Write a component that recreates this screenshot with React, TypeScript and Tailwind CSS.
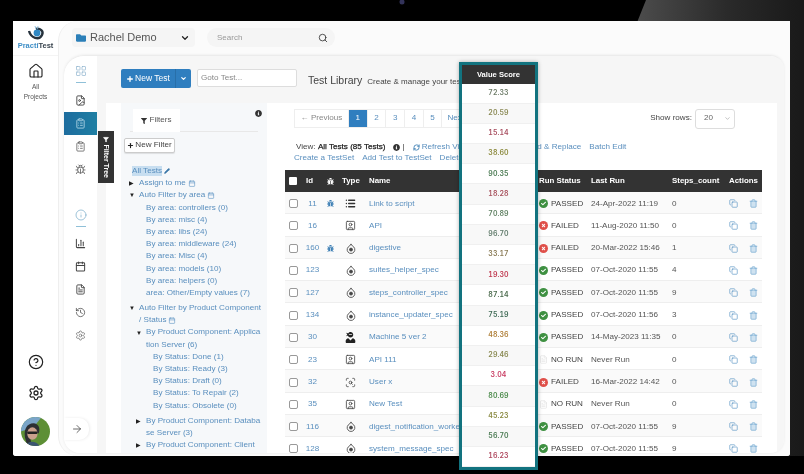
import {
  ArrowRight,
  Bug,
  ChevronDown,
  CircleHelp,
  ClipboardList,
  Copy,
  FileImage,
  FileText,
  History,
  House,
  Info,
  LayoutGrid,
  List,
  Pencil,
  RefreshCw,
  Search,
  Settings,
  SquareUser,
  Trash2,
  BarChart3,
  Calendar,
  Filter,
  Plus,
  ScanSearch,
} from 'lucide-react';
import { FaBug, FaCheck, FaTimes, FaInfoCircle, FaFilter, FaFolder, FaUserNinja } from 'react-icons/fa';

type Status = 'PASSED' | 'FAILED' | 'NO RUN';
type TestType = 'list' | 'api' | 'spec' | 'machine' | 'user';

interface TestRow {
  id: number;
  bug?: boolean;
  type: TestType;
  name: string;
  status: Status;
  lastRun: string;
  steps: number;
}

const rows: TestRow[] = [
  { id: 11, bug: true, type: 'list', name: 'Link to script', status: 'PASSED', lastRun: '24-Apr-2022 11:19', steps: 0 },
  { id: 16, type: 'api', name: 'API', status: 'FAILED', lastRun: '11-Aug-2020 11:50', steps: 0 },
  { id: 160, bug: true, type: 'spec', name: 'digestive', status: 'FAILED', lastRun: '20-Mar-2022 15:46', steps: 1 },
  { id: 123, type: 'spec', name: 'suites_helper_spec', status: 'PASSED', lastRun: '07-Oct-2020 11:55', steps: 4 },
  { id: 127, type: 'spec', name: 'steps_controller_spec', status: 'PASSED', lastRun: '07-Oct-2020 11:55', steps: 9 },
  { id: 134, type: 'spec', name: 'instance_updater_spec', status: 'PASSED', lastRun: '07-Oct-2020 11:56', steps: 3 },
  { id: 30, type: 'machine', name: 'Machine 5 ver 2', status: 'PASSED', lastRun: '14-May-2023 11:35', steps: 0 },
  { id: 23, type: 'api', name: 'API 111', status: 'NO RUN', lastRun: 'Never Run', steps: 0 },
  { id: 32, type: 'user', name: 'User x', status: 'FAILED', lastRun: '16-Mar-2022 14:42', steps: 0 },
  { id: 35, type: 'api', name: 'New Test', status: 'NO RUN', lastRun: 'Never Run', steps: 0 },
  { id: 116, type: 'spec', name: 'digest_notification_worker_spec', status: 'PASSED', lastRun: '07-Oct-2020 11:55', steps: 9 },
  { id: 128, type: 'spec', name: 'system_message_spec', status: 'PASSED', lastRun: '07-Oct-2020 11:55', steps: 9 },
];

const scores = [
  { v: '72.33', c: 'text-[#6f7d6a]' },
  { v: '20.59', c: 'text-[#8b8a55]' },
  { v: '15.14', c: 'text-[#a84f60]' },
  { v: '38.60', c: 'text-[#8d8b3f]' },
  { v: '90.35', c: 'text-[#4a7a52]' },
  { v: '18.28', c: 'text-[#a8525e]' },
  { v: '70.89', c: 'text-[#5f8062]' },
  { v: '96.70', c: 'text-[#5f7a6a]' },
  { v: '33.17', c: 'text-[#8a7b55]' },
  { v: '19.30', c: 'text-[#c03a50]' },
  { v: '87.14', c: 'text-[#4a6a4c]' },
  { v: '75.19', c: 'text-[#3f6a55]' },
  { v: '48.36', c: 'text-[#b0803a]' },
  { v: '29.46', c: 'text-[#8a8a52]' },
  { v: '3.04', c: 'text-[#c83a60]' },
  { v: '80.69', c: 'text-[#4a8a4a]' },
  { v: '45.23', c: 'text-[#8a8a42]' },
  { v: '56.70', c: 'text-[#4a7a52]' },
  { v: '16.23', c: 'text-[#b04a60]' },
];

interface TreeRow {
  text: string;
  pl: string;
  caret?: 'open' | 'closed';
  icon?: boolean;
  gap?: boolean;
}

const tree: TreeRow[] = [
  { text: 'Assign to me', pl: 'pl-[15px]', caret: 'closed', icon: true },
  { text: 'Auto Filter by area', pl: 'pl-[15px]', caret: 'open', icon: true },
  { text: 'By area: controllers (0)', pl: 'pl-[22px]' },
  { text: 'By area: misc (4)', pl: 'pl-[22px]' },
  { text: 'By area: libs (24)', pl: 'pl-[22px]' },
  { text: 'By area: middleware (24)', pl: 'pl-[22px]' },
  { text: 'By area: Misc (4)', pl: 'pl-[22px]' },
  { text: 'By area: models (10)', pl: 'pl-[22px]' },
  { text: 'By area: helpers (0)', pl: 'pl-[22px]' },
  { text: 'area: Other/Empty values (7)', pl: 'pl-[22px]' },
  { text: 'Auto Filter by Product Component', pl: 'pl-[15px]', caret: 'open', gap: true },
  { text: '/ Status', pl: 'pl-[15px]', icon: true },
  { text: 'By Product Component: Applica', pl: 'pl-[22px]', caret: 'open' },
  { text: 'tion Server (6)', pl: 'pl-[22px]' },
  { text: 'By Status: Done (1)', pl: 'pl-[29px]' },
  { text: 'By Status: Ready (3)', pl: 'pl-[29px]' },
  { text: 'By Status: Draft (0)', pl: 'pl-[29px]' },
  { text: 'By Status: To Repair (2)', pl: 'pl-[29px]' },
  { text: 'By Status: Obsolete (0)', pl: 'pl-[29px]' },
  { text: 'By Product Component: Databa', pl: 'pl-[22px]', caret: 'closed', gap: true },
  { text: 'se Server (3)', pl: 'pl-[22px]' },
  { text: 'By Product Component: Client', pl: 'pl-[22px]', caret: 'closed' },
];

function SpecIcon() {
  return (
    <svg viewBox="0 0 12 13" className="w-[10px] h-[11px] text-[#444]" fill="none" stroke="currentColor" strokeWidth="1">
      <path d="M6 1 L7.8 3.6 A4.6 4.6 0 1 1 4.2 3.6 Z" />
      <circle cx="6" cy="7.8" r="1.8" fill="currentColor" />
    </svg>
  );
}

function TypeIcon({ type }: { type: TestType }) {
  if (type === 'list') return <List className="w-[11px] h-[11px] text-[#333]" strokeWidth={3} />;
  if (type === 'api') return <SquareUser className="w-[11px] h-[11px] text-[#444]" strokeWidth={1.8} />;
  if (type === 'machine') return <FaUserNinja className="w-[11px] h-[11px] text-[#222]" />;
  if (type === 'user') return <ScanSearch className="w-[11px] h-[11px] text-[#444]" strokeWidth={1.8} />;
  return <SpecIcon />;
}

function StatusIcon({ status }: { status: Status }) {
  if (status === 'PASSED')
    return (
      <span className="w-[9px] h-[9px] shrink-0 rounded-full bg-[#3f9142] flex items-center justify-center">
        <FaCheck className="w-[5px] h-[5px] text-white" />
      </span>
    );
  if (status === 'FAILED')
    return (
      <span className="w-[9px] h-[9px] shrink-0 rounded-full bg-[#e0504a] flex items-center justify-center">
        <FaTimes className="w-[5px] h-[5px] text-white" />
      </span>
    );
  return <FileText className="w-[9px] h-[9px] shrink-0 text-[#ddd]" strokeWidth={1.5} />;
}

function Rail() {
  return (
    <div className="w-[45px] shrink-0 flex flex-col items-center bg-white">
      <svg viewBox="0 0 20 16" className="w-[20px] h-[16px] mt-[5px]" fill="none">
        <path d="M3 5 C5 12 13 15 16 9 C18 5 14 2 10 3" stroke="#26323d" strokeWidth="2.4" />
        <circle cx="11" cy="7" r="3.4" fill="#2f88c4" />
        <path d="M9 0 L10 3 M12 0 L11.5 3" stroke="#7fb8dc" strokeWidth="0.8" />
      </svg>
      <div className="text-[7.5px] leading-[10px] mt-[-1px] font-bold whitespace-nowrap">
        <span className="text-[#3f8fc7]">Practi</span>
        <span className="text-[#39444e]">Test</span>
      </div>
      <div className="w-full h-[1px] bg-[#f4f4f4] mt-[4px]" />
      <House className="w-[16px] h-[16px] mt-[7px] text-[#222]" strokeWidth={1.7} />
      <div className="text-[6.5px] leading-[10px] mt-[3px] text-center text-[#555]">
        All
        <br />
        Projects
      </div>
      <div className="flex-1" />
      <CircleHelp className="w-[16px] h-[16px] text-[#222]" strokeWidth={1.8} />
      <Settings className="w-[16px] h-[16px] mt-[15px] text-[#222]" strokeWidth={1.9} />
      <svg viewBox="0 0 28 28" className="w-[29px] h-[29px] mt-[16px] mb-[10px] rounded-full">
        <rect width="28" height="28" fill="#5d8f35" />
        <path d="M0 0 H20 L12 10 L0 14 Z" fill="#7aa5c8" />
        <path d="M5 24 C1 12 6 6 12 6 C17 6 19 11 17 16 C14 14 10 15 9 19 L10 28 H5 Z" fill="#2c2f33" />
        <ellipse cx="11" cy="16" rx="5" ry="6" fill="#c9a08c" />
        <rect x="6" y="14" width="10" height="2.5" rx="1" fill="#222" />
        <path d="M4 28 C6 23 14 22 18 28 Z" fill="#3b5570" />
      </svg>
    </div>
  );
}

function NavIcon({ children, line }: { children: React.ReactNode; line?: boolean }) {
  return (
    <div className="h-[23px] flex flex-col items-center justify-center relative">
      {children}
      {line && <span className="absolute bottom-[-1px] w-[10px] h-[1px] bg-[#8fc0d8]" />}
    </div>
  );
}

function IconColumn() {
  const icon = 'w-[11px] h-[11px] text-[#444]';
  return (
    <div className="w-[33px] shrink-0 bg-white flex flex-col pt-[3px] rounded-tl-[20px] pb-[13px]">
      <NavIcon line>
        <LayoutGrid className="w-[12px] h-[12px] text-[#8fb4cf]" strokeWidth={1.4} />
      </NavIcon>
      <div className="h-[7px]" />
      <NavIcon>
        <FileImage className={icon} strokeWidth={2} />
      </NavIcon>
      <div className="h-[23px] mt-[0px] bg-gradient-to-r from-[#1d6c9e] to-[#1f7fa3] flex items-center justify-center">
        <ClipboardList className="w-[11px] h-[11px] text-[#a9d0e2]" strokeWidth={2} />
      </div>
      <NavIcon>
        <ClipboardList className={icon} strokeWidth={1.5} />
      </NavIcon>
      <NavIcon>
        <Bug className={icon} strokeWidth={1.5} />
      </NavIcon>
      <div className="h-[22px]" />
      <NavIcon line>
        <Info className="w-[12px] h-[12px] text-[#7fb0cc]" strokeWidth={1.5} />
      </NavIcon>
      <div className="h-[6px]" />
      <NavIcon>
        <BarChart3 className={icon} strokeWidth={2.2} />
      </NavIcon>
      <NavIcon>
        <Calendar className={icon} strokeWidth={2.2} />
      </NavIcon>
      <NavIcon>
        <FileText className={icon} strokeWidth={2} />
      </NavIcon>
      <NavIcon>
        <History className={icon} strokeWidth={1.6} />
      </NavIcon>
      <NavIcon>
        <Settings className="w-[11px] h-[11px] text-[#666]" strokeWidth={1.5} />
      </NavIcon>
      <div className="flex-1" />
      <div className="w-[25px] h-[22px] bg-white rounded-r-[10px] shadow-[1px_0_3px_rgba(0,0,0,0.08)] flex items-center justify-center">
        <ArrowRight className="w-[12px] h-[12px] text-[#444]" strokeWidth={1.6} />
      </div>
    </div>
  );
}

function FilterPanel() {
  return (
    <div className="w-[146px] shrink-0 bg-[#f6f8fa] px-[3px] pt-[6px] relative">
      <div className="h-[23px] border-b border-[#e8e8e8] mx-[6px]">
        <div className="w-[47px] h-[23px] ml-[3px] bg-white flex items-center justify-center gap-[2px] text-[#555]">
          <FaFilter className="w-[6px] h-[6px] text-[#333]" />
          Filters
        </div>
      </div>
      <FaInfoCircle className="absolute left-[134px] top-[7px] w-[7px] h-[7px] text-[#333]" />
      <div className="w-[51px] h-[15px] mt-[6px] bg-white border border-[#ccc] rounded-[2px] shadow-[0_1px_1px_rgba(0,0,0,0.1)] flex items-center justify-center gap-[1px] text-[#444]">
        <Plus className="w-[7px] h-[7px] text-[#222]" strokeWidth={4} />
        New Filter
      </div>
      <div className="h-[12.2px] mt-[12px] pl-[8px] flex items-center gap-[2px] text-[#5a8fbe]">
        <span className="bg-[#c7def0] leading-[10px]">All Tests</span>
        <Pencil className="w-[6px] h-[6px] text-[#3d78a8] fill-[#3d78a8]" />
      </div>
      {tree.map((row) => (
        <div
          key={row.text}
          className={`h-[12.2px] flex items-center whitespace-nowrap relative text-[#5a8fbe] ${row.pl} ${row.gap ? 'mt-[3px]' : ''}`}
        >
          {row.caret && (
            <span
              className={`absolute ${row.pl === 'pl-[15px]' ? 'left-[5px]' : 'left-[12px]'} text-[#222] text-[6px] leading-none`}
            >
              {row.caret === 'open' ? '▼' : '▶'}
            </span>
          )}
          {row.text}
          {row.icon && <Calendar className="w-[8px] h-[7px] ml-[2px] text-[#5b93c2]" strokeWidth={2} />}
        </div>
      ))}
    </div>
  );
}

function PageCell({ label, active }: { label: string; active?: boolean }) {
  return (
    <div
      className={`w-[18.7px] h-[19px] flex items-center justify-center border-y border-r border-[#eee] ${
        active ? 'bg-[#2f7ebf] text-white' : 'text-[#5a8fbe]'
      }`}
    >
      {label}
    </div>
  );
}

function TestTable() {
  return (
    <div className="w-[477px]">
      <div className="h-[22px] bg-[#333333] flex items-center text-white font-bold text-[7.9px]">
        <div className="w-[18px] pl-[4px]">
          <span className="block w-[8px] h-[8px] bg-white rounded-[1px]" />
        </div>
        <div className="w-[19px] pl-[3px]">Id</div>
        <div className="w-[16px] flex justify-center">
          <FaBug className="w-[7px] h-[7px]" />
        </div>
        <div className="w-[25px] pl-[4px]">Type</div>
        <div className="w-[168px] pl-[6px]">Name</div>
        <div className="w-[55px] pl-[8px] whitespace-nowrap">Run Status</div>
        <div className="w-[81px] pl-[5px]">Last Run</div>
        <div className="w-[60px] pl-[5px]">Steps_count</div>
        <div className="w-[35px] pl-[2px]">Actions</div>
      </div>
      {rows.map((row, i) => (
        <div
          key={row.id}
          className={`h-[22.3px] pt-[2px] flex items-center border-b border-[#eeeeee] ${i % 2 ? 'bg-white' : 'bg-[#fafafa]'}`}
        >
          <div className="w-[18px] pl-[4px]">
            <span className="block w-[9px] h-[9px] bg-white border border-[#999] rounded-[2px]" />
          </div>
          <div className="w-[19px] text-center text-[#5a8fbe]">{row.id}</div>
          <div className="w-[16px] flex justify-center">
            {row.bug && <FaBug className="w-[7px] h-[7px] text-[#3f80b5]" />}
          </div>
          <div className="w-[25px] flex justify-center">
            <TypeIcon type={row.type} />
          </div>
          <div className="w-[168px] pl-[6px] text-[#5a8fbe] whitespace-nowrap overflow-hidden">{row.name}</div>
          <div className="w-[55px] pl-[8px] flex items-center gap-[3px] text-[#444]">
            <StatusIcon status={row.status} />
            <span className="whitespace-nowrap">{row.status}</span>
          </div>
          <div className="w-[81px] pl-[5px] text-[#555] whitespace-nowrap">{row.lastRun}</div>
          <div className="w-[60px] pl-[5px] text-[#555]">{row.steps}</div>
          <div className="w-[35px] flex items-center gap-[11px] pl-[2px]">
            <Copy className="w-[9px] h-[9px] text-[#4a8cc0]" strokeWidth={1.6} />
            <Trash2 className="w-[9px] h-[9px] text-[#6fa6cf] fill-[#cfe2f0]" strokeWidth={1.8} />
          </div>
        </div>
      ))}
    </div>
  );
}

function ValueScoreOverlay() {
  return (
    <div className="absolute left-[459px] top-[62px] w-[79px] h-[408px] border-[3px] border-[#12737f] bg-white flex flex-col shadow-[0_0_4px_rgba(0,0,0,0.3)]">
      <div className="h-[18.5px] bg-[#333333] text-white font-bold text-[7.6px] flex items-center justify-center shrink-0">
        Value Score
      </div>
      {scores.map((s, i) => (
        <div
          key={s.v}
          className={`h-[20.2px] shrink-0 border-b border-[#f0f0f0] flex items-center justify-center font-['Inter',sans-serif] font-semibold text-[7px] tabular-nums tracking-[0.1px] ${s.c} ${
            i % 2 ? 'bg-[#f8f8f8]' : 'bg-white'
          }`}
        >
          {s.v}
        </div>
      ))}
    </div>
  );
}

export default function App() {
  return (
    <div className="w-[804px] h-[474px] bg-black relative overflow-hidden font-['Liberation_Sans',Arial,sans-serif] text-[8.1px] blur-[0.5px]">
      {/* backdrop behind the window */}
      <svg className="absolute inset-0 w-full h-full" viewBox="0 0 804 474">
        <defs>
          <linearGradient id="band" x1="0" x2="1" y1="0" y2="0">
            <stop offset="0" stopColor="#4d4d4d" />
            <stop offset="0.55" stopColor="#2a2a2a" />
            <stop offset="1" stopColor="#191919" />
          </linearGradient>
        </defs>
        <polygon points="634,30 646,0 804,0 804,456 634,456" fill="url(#band)" />
        <circle cx="402" cy="2" r="2.5" fill="#33335a" />
      </svg>

      <div className="relative ml-[13px] mt-[21px] w-[777px] h-[435px] bg-white flex overflow-hidden rounded-bl-[3px] rounded-br-[3px]">
        <Rail />
        <div className="flex-1 min-w-0 bg-[#fbfbfb] rounded-tl-[20px] rounded-bl-[20px] border-l border-[#eeeeee] pl-[5px] pr-[6px] pb-[3px] flex flex-col">
          {/* top bar */}
          <div className="h-[34px] shrink-0 flex items-center pl-[8px] pb-[1px]">
            <div className="w-[123px] h-[19px] bg-[#f5f5f5] rounded-[4px] flex items-center pl-[4px]">
              <FaFolder className="w-[10px] h-[10px] text-[#2b7fb8]" />
              <span className="ml-[4px] text-[11px] text-[#555] whitespace-nowrap">Rachel Demo</span>
              <ChevronDown className="w-[10px] h-[10px] ml-auto mr-[5px] text-[#222]" strokeWidth={3} />
            </div>
            <div className="w-[128px] h-[19px] ml-[12px] bg-[#f5f5f5] rounded-full flex items-center pl-[10px] pr-[7px] text-[#999] text-[8px]">
              Search
              <Search className="w-[10px] h-[10px] ml-auto text-[#333]" strokeWidth={2} />
            </div>
          </div>

          {/* inner panel */}
          <div className="flex-1 min-h-0 flex rounded-tl-[20px] rounded-tr-[14px] rounded-bl-[16px] rounded-br-[14px] border-t border-[#ececec] overflow-hidden shadow-[0_0_3px_rgba(0,0,0,0.08)]">
            <IconColumn />
            <div className="flex-1 min-w-0 bg-[#f6f6f6] flex flex-col">
              <div className="h-[47px] shrink-0 flex items-start pl-[24px] pt-[13px]">
                <div className="w-[70px] h-[19px] bg-[#2f7ebf] rounded-[2px] text-white text-[8.5px] flex items-center">
                  <div className="w-[55px] h-full flex items-center justify-center gap-[1px] border-r border-[#286fa9]">
                    <Plus className="w-[8px] h-[8px]" strokeWidth={4} />
                    New Test
                  </div>
                  <div className="flex-1 flex justify-center">
                    <ChevronDown className="w-[7px] h-[7px]" strokeWidth={4} />
                  </div>
                </div>
                <div className="w-[100px] h-[18px] ml-[6px] bg-white border border-[#ddd] rounded-[2px] pl-[3px] flex items-center text-[#888]">
                  Goto Test...
                </div>
                <div className="ml-[11px] h-[18px] flex items-baseline whitespace-nowrap text-[#444] pt-[4px]">
                  <span className="text-[10.5px]">Test Library</span>
                  <span className="ml-[5px] text-[8px]">Create &amp; manage your tests</span>
                </div>
              </div>

              <div className="flex-1 min-h-0 ml-[9px] mr-[7px] bg-white flex overflow-hidden">
                <div className="w-[15px] shrink-0" />
                <FilterPanel />
                <div className="flex-1 min-w-0 pl-[18px] pr-[15px]">
                  {/* pagination */}
                  <div className="h-[19px] mt-[6px] flex items-center relative">
                    <div className="w-[9px]" />
                    <div className="w-[55px] h-[19px] flex items-center justify-center border border-[#eee] text-[#888]">
                      ← Previous
                    </div>
                    <PageCell label="1" active />
                    <PageCell label="2" />
                    <PageCell label="3" />
                    <PageCell label="4" />
                    <PageCell label="5" />
                    <div className="w-[30px] h-[19px] pl-[5px] flex items-center border-y border-r border-[#eee] text-[#5a8fbe]">
                      Next
                    </div>
                    <div className="ml-auto mr-[27px] flex items-center gap-[3px] text-[#444]">
                      Show rows:
                      <div className="w-[40px] h-[20px] border border-[#ddd] rounded-[3px] flex items-center pl-[8px] pr-[3px] text-[#666]">
                        20
                        <ChevronDown className="w-[7px] h-[7px] ml-auto text-[#999]" strokeWidth={2} />
                      </div>
                    </div>
                  </div>

                  {/* view links */}
                  <div className="h-[11px] mt-[14px] flex items-center whitespace-nowrap pl-[9px]">
                    <div className="w-[232px] pl-[2px] flex items-center text-[#444]">
                      View:&nbsp;
                      <span className="text-[#222] [-webkit-text-stroke:0.25px_#222]">All Tests (85 Tests)</span>
                      <FaInfoCircle className="w-[7px] h-[7px] ml-[7px] text-[#333]" />
                      <span className="ml-[3px]">|</span>
                      <RefreshCw className="w-[7px] h-[7px] ml-[8px] text-[#3f80b5]" strokeWidth={3} />
                      <span className="ml-[2px] text-[#5a8fbe]">Refresh View</span>
                    </div>
                    <span className="text-[#5a8fbe]">Find &amp; Replace</span>
                    <span className="ml-[8px] text-[#5a8fbe]">Batch Edit</span>
                  </div>
                  <div className="h-[11px] flex items-center gap-[8px] whitespace-nowrap pl-[9px] text-[#5a8fbe]">
                    <span>Create a TestSet</span>
                    <span>Add Test to TestSet</span>
                    <span>Delete Tests</span>
                  </div>
                  <div className="h-[6px]" />
                  <TestTable />
                </div>
              </div>
            </div>
          </div>
        </div>
      </div>

      {/* collapsed filter tree tab */}
      <div className="absolute left-[98px] top-[131px] w-[16px] h-[52px] bg-[#333333] flex items-center justify-center">
        <div className="rotate-90 whitespace-nowrap text-white font-bold text-[7px] flex items-center gap-[2px]">
          <Filter className="w-[6px] h-[6px] fill-white -rotate-90" />
          Filter Tree
        </div>
      </div>

      <ValueScoreOverlay />
    </div>
  );
}
